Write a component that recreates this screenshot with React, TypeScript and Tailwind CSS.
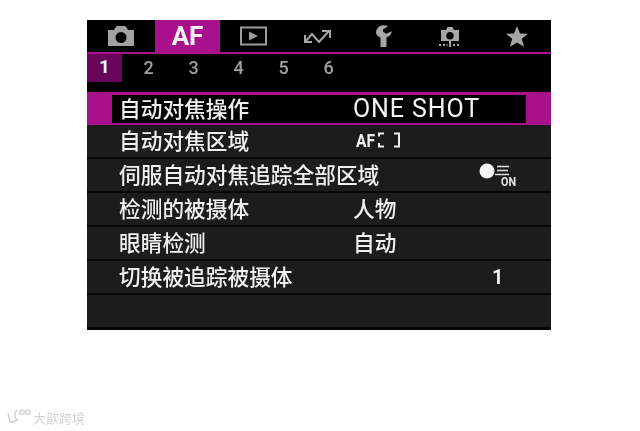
import React from "react";

const magenta = "bg-[#a8108c]";
const latin = { fontFamily: 'Roboto, "Liberation Sans", sans-serif' };

function Icon({ children }: { children: React.ReactNode }) {
  return (
    <svg width={32} height={26} viewBox="0 0 32 26" className="block">
      {children}
    </svg>
  );
}

const cameraIcon = (
  <Icon>
    <path fill="#a2a2a2" fillRule="evenodd" d="M3 7h6l2.500-4h9L23 7h6v16H3z M16 9a5.500 5.500 0 1 0 0 11a5.500 5.500 0 0 0 0-11z" />
  </Icon>
);
const playIcon = (
  <Icon>
    <rect x="4" y="4.500" width="25" height="17" fill="none" stroke="#9c9c9c" strokeWidth="2" />
    <path fill="#9c9c9c" d="M12 8.500l9 4.500l-9 4.500z" />
  </Icon>
);
const waveIcon = (
  <Icon>
    <path fill="none" stroke="#a6a6a6" strokeWidth="2" d="M3 19l7-8l7 8l10-11" />
    <path fill="none" stroke="#a6a6a6" strokeWidth="2" d="M20 8h8v7" />
    <path fill="none" stroke="#a6a6a6" strokeWidth="2" d="M3 12v7h7" />
  </Icon>
);
const wrenchIcon = (
  <Icon>
    <path fill="#a6a6a6" d="M12 3c-3 2-4.500 4.600-3.800 7.500c.5 1.900 2 3.300 4.300 4V24h6v-9.500c2.700-.9 5-3.200 5.300-6.200l-5.800 2.400l-3-2.200V6.500L20 3.200C17.500 2.200 14.500 1.800 12 3z" />
  </Icon>
);
const customIcon = (
  <Icon>
    <path fill="#a6a6a6" fillRule="evenodd" d="M7 7h5l1.500-3h5L20 7h5v11H7z M16 9a3.700 3.700 0 1 0 0 7.400a3.700 3.700 0 0 0 0-7.400z" />
    <path fill="#a6a6a6" d="M15 18h2v6h-2z M5 21h2v2H5z M9 21h2v2H9z M12.500 21h1v2h-1z M19 21h2v2h-2z M23 21h2v2h-2z" />
  </Icon>
);
const starIcon = (
  <Icon>
    <path fill="#a6a6a6" d="M16 3l3 7.400l8 .4l-6.200 5l2.200 8L16 19.500L9 23.800l2.200-8L5 10.800l8-.4z" />
  </Icon>
);

const tabs: { key: string; w: string; icon?: React.ReactNode }[] = [
  { key: "cam", w: "w-[68px]", icon: cameraIcon },
  { key: "af", w: "w-[65px]" },
  { key: "play", w: "w-[65px]", icon: playIcon },
  { key: "wave", w: "w-[66px]", icon: waveIcon },
  { key: "wrench", w: "w-[66px]", icon: wrenchIcon },
  { key: "custom", w: "w-[66px]", icon: customIcon },
  { key: "star", w: "w-[68px]", icon: starIcon },
];

const labelClass = "w-[234px] shrink-0 whitespace-nowrap text-[21.7px] leading-none font-medium text-[#f0f0f0]";

function Row({
  label,
  children,
  valueClass = "",
}: {
  label: string;
  children?: React.ReactNode;
  valueClass?: string;
}) {
  return (
    <div className="flex h-[34px] shrink-0 items-center border-b-2 border-[#060606] bg-[#1c1c1c] pb-[2px] pl-[32px]">
      <span className={labelClass}>{label}</span>
      <span className={`text-[#f0f0f0] ${valueClass}`}>{children}</span>
    </div>
  );
}

export default function App() {
  return (
    <div
      className="relative h-[431px] w-[640px] overflow-hidden bg-white pt-[20px] pl-[87px]"
      style={{ fontFamily: '"Noto Sans CJK SC", "Liberation Sans", sans-serif' }}
    >
      <div className="flex h-[310px] w-[464px] flex-col bg-black blur-[0.4px]">
        <div className="flex h-[34px] shrink-0 border-b-2 border-[#a8108c]">
          {tabs.map((t) => (
            <div
              key={t.key}
              className={`flex items-center justify-center ${t.w} ${t.key === "af" ? magenta : ""}`}
            >
              {t.icon ?? (
                <span className="text-[26px] leading-none font-bold text-[#f4f0f4]" style={latin}>
                  AF
                </span>
              )}
            </div>
          ))}
        </div>
        <div className="flex h-[40px] shrink-0 items-start border-b-2 border-[#a8108c]">
          <div
            className="flex h-[28px] w-[35px] items-center justify-center bg-[#68065c] pb-[2px] text-[19px] font-bold text-[#f4f4f4]"
            style={latin}
          >
            1
          </div>
          <div className="flex h-[28px] items-center pb-[2px] pl-[4px] text-[18px] font-medium text-[#a0a0a0]" style={latin}>
            {["2", "3", "4", "5", "6"].map((n) => (
              <span key={n} className="w-[45px] text-center">
                {n}
              </span>
            ))}
          </div>
        </div>
        <div className={`flex h-[31px] shrink-0 items-stretch ${magenta} px-[25px] py-[1px] pb-[2px]`}>
          <div className="flex flex-1 items-center bg-black pb-[2px] pl-[7px]">
            <span className={labelClass}>自动对焦操作</span>
            <span className="text-[25px] leading-none tracking-[0.9px] text-[#f4f4f4]" style={latin}>
              ONE SHOT
            </span>
          </div>
        </div>
        <Row label="自动对焦区域" valueClass="flex items-center pl-[3px]">
          <svg width="46" height="18" viewBox="0 0 46 18" className="block">
            <text x="0" y="15.500" fill="#f0f0f0" fontSize="18" fontWeight="700" textLength="19" lengthAdjust="spacingAndGlyphs" style={latin}>
              AF
            </text>
            <path fill="none" stroke="#f0f0f0" strokeWidth="2" d="M28 2.500H23v3 M23 12v3.500h5 M38 2.500h5v13h-5" />
          </svg>
        </Row>
        <Row label="伺服自动对焦追踪全部区域" valueClass="flex items-center pl-[126px]">
          <svg width="40" height="26" viewBox="0 0 40 26" className="block">
            <circle cx="8" cy="10" r="7.500" fill="#f4f4f4" />
            <path stroke="#e0e0e0" strokeWidth="1.500" d="M18 5.500h12 M18 9.500h11 M16 13.500h14" />
            <text x="22" y="24.500" fill="#e8e8e8" fontSize="13" fontWeight="700" textLength="15" lengthAdjust="spacingAndGlyphs" style={latin}>
              ON
            </text>
          </svg>
        </Row>
        <Row label="检测的被摄体" valueClass="text-[21.7px] leading-none font-medium">
          人物
        </Row>
        <Row label="眼睛检测" valueClass="text-[21.7px] leading-none font-medium">
          自动
        </Row>
        <Row label="切换被追踪被摄体" valueClass="pl-[139px] text-[20px] leading-none font-bold">
          <span style={latin}>1</span>
        </Row>
        <div className="h-[32px] shrink-0 bg-[#1c1c1c]" />
        <div className="flex-1 bg-[#060606]" />
      </div>
      <div className="absolute top-[408px] left-[7px] flex items-center gap-[2px] text-[13px] leading-none text-[#d4d4d4] blur-[0.7px]">
        <svg width="24" height="18" viewBox="0 0 24 18" className="block">
          <path
            fill="none"
            stroke="#d4d4d4"
            strokeWidth="1.500"
            d="M1 5l2 9c3 1 6-1 7-4 M10 2c-3 2-3 9 1 11 M15 2a2.200 2.200 0 1 0 .1 0 M21 2a2.200 2.200 0 1 0 .1 0"
          />
        </svg>
        <span>大歆跨境</span>
      </div>
    </div>
  );
}
